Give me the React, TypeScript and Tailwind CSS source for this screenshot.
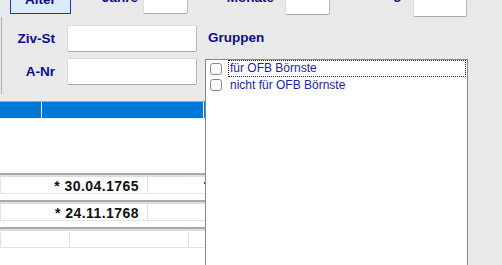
export default function App() {
  const label = "font-bold text-[13.5px] leading-none text-[#0c0c8c] whitespace-nowrap";
  const input = "bg-white border border-[#dcdcdc] border-b-[#a9a9a9] border-r-[#b9b9b9] rounded-[2px]";
  const records = [
    { cells: [{ w: "w-[147px]", text: "* 30.04.1765" }, { w: "flex-1", text: "", tick: true }] },
    { cells: [{ w: "w-[147px]", text: "* 24.11.1768" }, { w: "flex-1", text: "" }] },
    { cells: [{ w: "w-[69px]", text: "" }, { w: "w-[119px]", text: "" }, { w: "flex-1", text: "" }] },
  ];
  return (
    <div className="w-[502px] h-[265px] overflow-hidden bg-[#e9e9e9] font-['Liberation_Sans',Arial,sans-serif]">
      {/* top row (clipped) */}
      <div className="flex items-end h-[17px]">
        <button className="ml-[10px] mb-[3px] w-[61px] h-[30px] shrink-0 border border-[#1c3c9c] bg-[#dcebfb] flex items-end justify-center pb-[7px]">
          <span className={label}>Alter</span>
        </button>
        <div className={`w-[67px] shrink-0 text-right mb-[13px] ${label}`}>Jahre</div>
        <div className={`ml-[5px] mb-[3px] w-[45px] h-[24px] shrink-0 ${input} border-b-[#8c8c8c] border-r-[#9a9a9a]`} />
        <div className={`w-[86px] shrink-0 text-right mb-[13px] ${label}`}>Monate</div>
        <div className={`ml-[11px] mb-[2px] w-[45px] h-[24px] shrink-0 ${input} border-b-[#8c8c8c] border-r-[#9a9a9a]`} />
        <div className={`w-[79px] shrink-0 text-right mb-[16px] ${label}`}>Tage</div>
        <div className={`ml-[4px] w-[54px] h-[24px] shrink-0 ${input} border-b-[#8c8c8c] border-r-[#9a9a9a]`} />
      </div>

      <div className="flex">
        {/* left column */}
        <div className="w-[205px] shrink-0 flex flex-col">
          <div className="ml-[1px] border-l border-[#b0b0b0] pt-[8px] pb-[9px] flex flex-col gap-[6px]">
            <div className="flex items-center">
              <div className={`w-[53px] text-right ${label}`}>Ziv-St</div>
              <div className={`ml-[12px] w-[130px] h-[27px] ${input}`} />
            </div>
            <div className="flex items-center">
              <div className={`w-[53px] text-right ${label}`}>A-Nr</div>
              <div className={`ml-[12px] w-[130px] h-[27px] ${input}`} />
            </div>
          </div>

          {/* grid */}
          <div className="mt-[7px] border-t border-[#a5a5a5] flex flex-col">
            <div className="h-[16px] flex bg-[#0078d7]">
              <div className="w-[41px]" />
              <div className="w-[1px] bg-white" />
              <div className="w-[161px]" />
              <div className="w-[1px] bg-white" />
              <div className="flex-1" />
            </div>
            <div className="h-[55px] bg-white border-t border-[#e6f0fa]" />
            {records.map((r, i) => (
              <div key={i} className="flex flex-col">
                <div className="h-[2px] bg-[#a9a9a9]" />
                <div className="h-[2px] bg-[#dedede]" />
                <div className="h-[17px] flex bg-white border-b border-[#e4e4e4]">
                  {r.cells.map((c, j) =>
                    c.tick ? (
                      <div key={j} className={`${c.w} border-l border-[#e4e4e4] flex justify-end items-start pt-[5px]`}>
                        <div className="w-[1px] h-[2px] bg-[#b01010]" />
                      </div>
                    ) : (
                      <div
                        key={j}
                        className={`${c.w} border-l border-[#e4e4e4] flex items-center justify-end pr-[8px] pt-[1px] font-bold text-[14px] tracking-[0.45px] leading-none text-[#111] whitespace-nowrap`}
                      >
                        {c.text}
                      </div>
                    )
                  )}
                </div>
                <div className="h-[6px] bg-white" />
              </div>
            ))}
            <div className="h-[40px] bg-white" />
          </div>
        </div>

        {/* right column */}
        <div className="w-[263px] shrink-0 flex flex-col">
          <div className="h-[42px] pl-[3px] pt-[14px]">
            <div className={label}>Gruppen</div>
          </div>
          <div className="h-[230px] bg-white border border-[#86868e] flex flex-col text-[12px] text-[#1e1ea8]">
            <div className="h-[17px] flex items-start">
              <div className="ml-[4px] mt-[3px] w-[12px] h-[12px] shrink-0 rounded-[3px] border border-[#8a8a8a] bg-white" />
              <div className="ml-[6px] mr-[1px] flex-1 h-[17px] border border-dotted border-[#222] pl-[1px] pt-[1px] leading-[13px] whitespace-nowrap">
                für OFB Börnste
              </div>
            </div>
            <div className="h-[17px] flex items-start">
              <div className="ml-[4px] mt-[2px] w-[12px] h-[12px] shrink-0 rounded-[3px] border border-[#8a8a8a] bg-white" />
              <div className="ml-[6px] mr-[1px] flex-1 h-[17px] border border-transparent pl-[1px] pt-[1px] leading-[13px] whitespace-nowrap">
                nicht für OFB Börnste
              </div>
            </div>
          </div>
        </div>
      </div>
    </div>
  );
}
